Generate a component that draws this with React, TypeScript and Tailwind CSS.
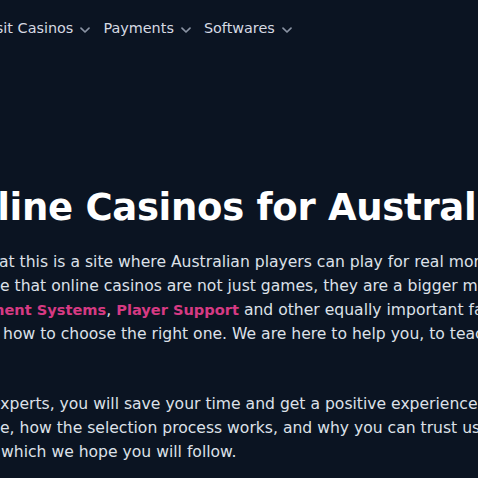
import React from "react";

const Chevron = () => (
  <svg width="12" height="12" viewBox="0 0 12 12" className="ml-[6px] mt-[2px]" fill="none">
    <path d="M2 4.2 L6 8 L10 4.2" stroke="#8a93a3" strokeWidth="1.7" strokeLinecap="round" strokeLinejoin="round" />
  </svg>
);

export default function App() {
  const font = { fontFamily: '"DejaVu Sans", "Noto Sans", sans-serif' };
  return (
    <div className="w-[478px] h-[478px] overflow-hidden bg-[#0b1422] text-[#dde1e9]" style={font}>
      <nav className="flex items-center h-[56px] pt-[2px] whitespace-nowrap text-[14.4px] text-[#d6dae3]">
        <div className="flex items-center -ml-[42px]">
          <span>Deposit Casinos</span>
          <Chevron />
        </div>
        <div className="flex items-center ml-[12px]">
          <span>Payments</span>
          <Chevron />
        </div>
        <div className="flex items-center ml-[12px]">
          <span>Softwares</span>
          <Chevron />
        </div>
      </nav>
      <h1 className="mt-[128px] whitespace-nowrap text-[37px] font-bold leading-[48px] tracking-[-0.3px] text-white -ml-[60px]">
        Online Casinos for Australians
      </h1>
      <div className="mt-[18px] text-[15.6px] leading-[24px]">
        <div className="whitespace-nowrap -ml-[17px]">that this is a site where Australian players can play for real money.</div>
        <div className="whitespace-nowrap">e that online casinos are not just games, they are a bigger matter</div>
        <div className="whitespace-nowrap -ml-[40px]">
          <a className="font-bold text-[14.6px] text-[#d63a83]">Payment Systems</a>,{" "}
          <a className="font-bold text-[14.6px] text-[#d63a83]">Player Support</a> and other equally important factors
        </div>
        <div className="whitespace-nowrap pl-[3px]">how to choose the right one. We are here to help you, to teach you</div>
      </div>
      <div className="mt-[46px] text-[15.6px] leading-[24px]">
        <div className="whitespace-nowrap -ml-[9px]">experts, you will save your time and get a positive experience</div>
        <div className="whitespace-nowrap">e, how the selection process works, and why you can trust us</div>
        <div className="whitespace-nowrap pl-[1px]">which we hope you will follow.</div>
      </div>
    </div>
  );
}
